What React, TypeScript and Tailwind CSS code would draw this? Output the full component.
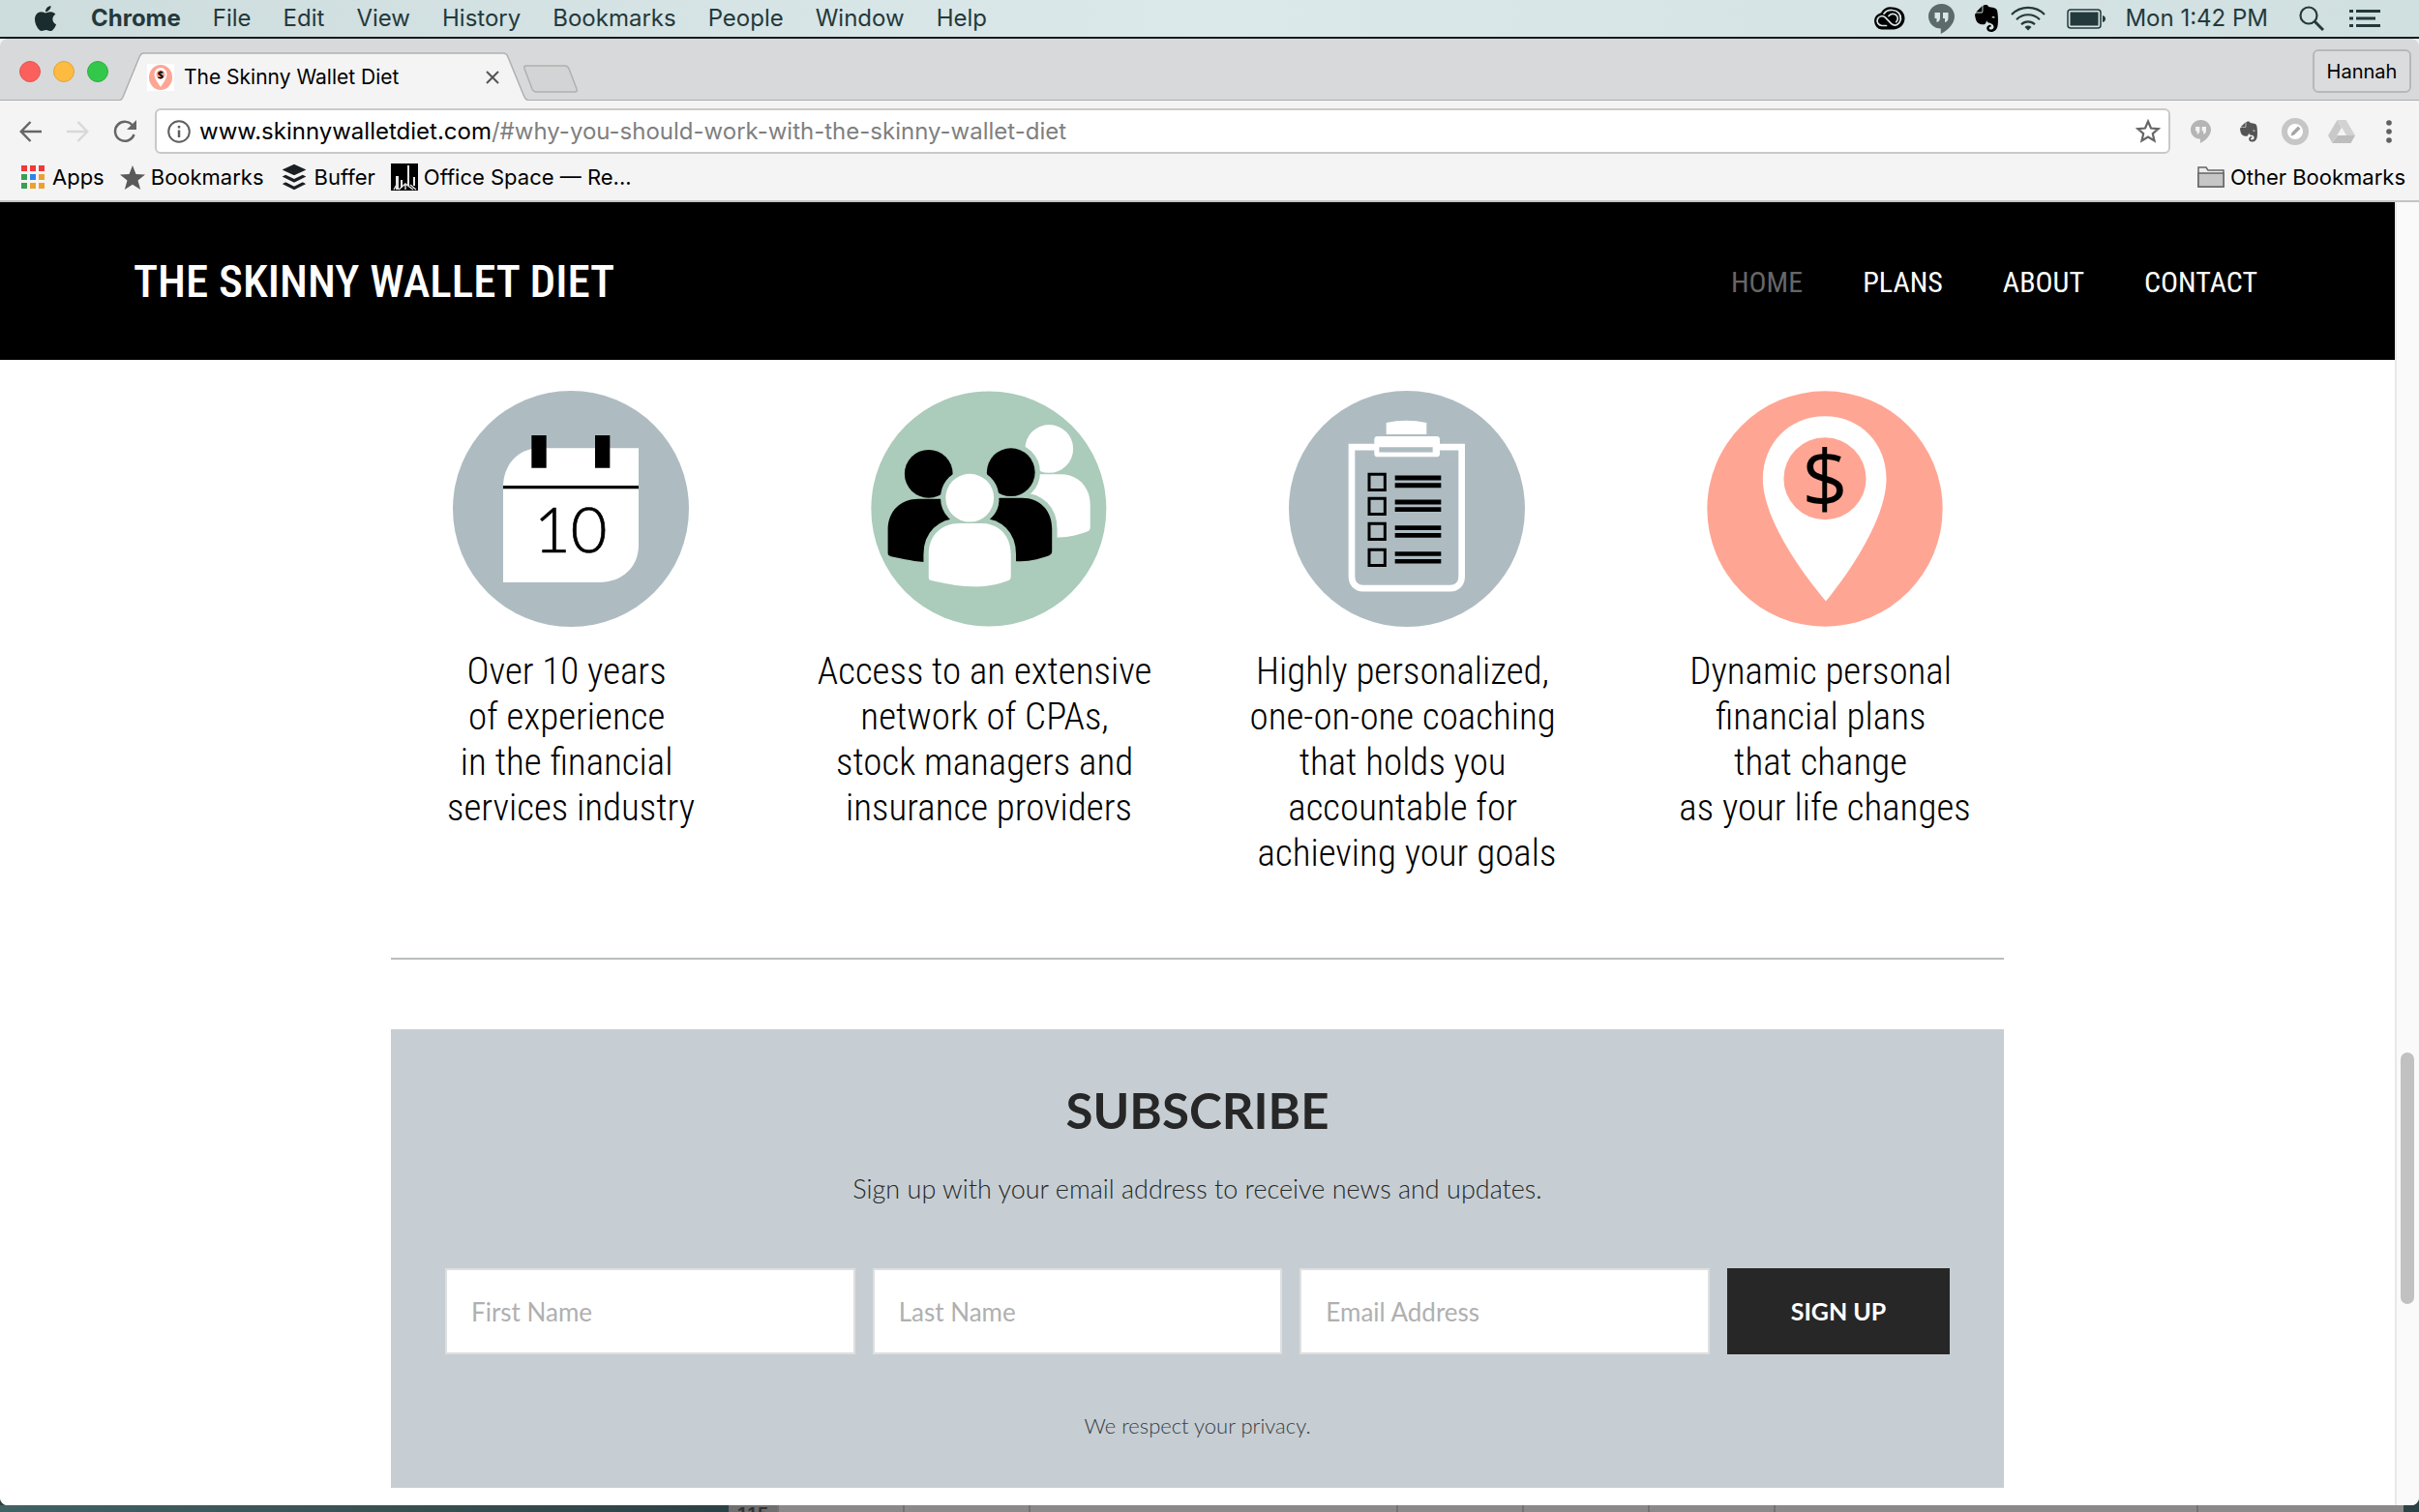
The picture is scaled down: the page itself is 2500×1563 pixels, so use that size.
import type { ReactNode } from "react";
import { FaApple, FaBuffer, FaEvernote } from "react-icons/fa";

const UI_FONT = "font-[Inter,'Liberation_Sans',sans-serif]";

function HangoutsIcon({ className, ink }: { className: string; ink: string }) {
  return (
    <svg viewBox="0 0 27 31" className={className} aria-hidden="true">
      <path d="M13.500 0C6 0 0 5.800 0 13s6 12.600 12.800 12.600V31C20 27.500 27 20.500 27 13 27 5.800 21 0 13.500 0z" fill="currentColor" />
      <path d="M6.500 9h5.500v5.500c0 2.500-1.200 4-3.500 4.500v-4h-2zM15 9h5.500v5.500c0 2.500-1.200 4-3.500 4.500v-4h-2z" fill={ink} />
    </svg>
  );
}

function CreativeCloudIcon() {
  return (
    <svg viewBox="0 0 34 24" className="h-6 w-[34px]" aria-hidden="true">
      <path d="M9.500 23.500A8.800 8.800 0 0 1 9 6.200 11.800 11.800 0 0 1 21 .5c7 0 12.500 5 12.500 11.500S28 23.500 21.500 23.500z" fill="#000" />
      <g fill="none" stroke="#d8e5e6" strokeWidth="1.700" strokeLinecap="round">
        <path d="M14.500 19.500H10a4.900 4.900 0 1 1 3.500-8.300l6 6.200c2 1.800 4.500 2 6.500.8a7 7 0 0 0 2.500-9.200" />
        <path d="M12 7.200C14 4.500 17.500 3 21 3.500c5.500.5 9 4.500 8.500 9.500" />
        <path d="M17 9.500c2-2.500 5.500-3 7.700-.8 2.200 2 2 5.300 0 7" />
      </g>
    </svg>
  );
}

function WifiIcon() {
  return (
    <svg viewBox="0 0 36 26" className="h-[26px] w-9" aria-hidden="true" fill="none" stroke="#24393b" strokeWidth="2.200">
      <path d="M1 9a24 24 0 0 1 34 0M6 14.200a17 17 0 0 1 24 0M11 19.200a10 10 0 0 1 14 0" />
      <path d="M18 25.500l-3.500-3.600a5 5 0 0 1 7 0z" fill="#24393b" stroke="none" />
    </svg>
  );
}

function BatteryIcon() {
  return (
    <svg viewBox="0 0 40 21" className="h-[21px] w-10" aria-hidden="true">
      <rect x="1" y="1" width="34" height="19" rx="3" fill="none" stroke="#24393b" strokeWidth="1.500" />
      <rect x="3.500" y="3.500" width="29" height="14" fill="#24393b" />
      <path d="M37 7c2 .5 3 1.800 3 3.500s-1 3-3 3.500z" fill="#24393b" />
    </svg>
  );
}

const menus = ["File", "Edit", "View", "History", "Bookmarks", "People", "Window", "Help"];

function MenuBar() {
  return (
    <div className="flex h-[38px] items-center bg-linear-to-r from-[#cddcdd] via-[#dce9ea] to-[#d0dfe0] text-[24px] leading-[38px] text-[#24393b]">
      <FaApple className="ml-[34px] h-[30px] w-[26px] text-[#1b2c2e]" aria-hidden="true" />
      <nav className="ml-[34px] flex gap-[33px]">
        <button className="font-bold">Chrome</button>
        {menus.map((m) => (
          <button key={m}>{m}</button>
        ))}
      </nav>
      <div className="ml-auto mr-10 flex items-center">
        <CreativeCloudIcon />
        <HangoutsIcon className="ml-6 h-[31px] w-[27px] text-[#5b6b6c]" ink="#dae7e8" />
        <FaEvernote className="ml-5 h-8 w-[26px] text-black" aria-hidden="true" />
        <span className="ml-3">
          <WifiIcon />
        </span>
        <span className="ml-[22px]">
          <BatteryIcon />
        </span>
        <time className="ml-5">Mon 1:42 PM</time>
        <svg viewBox="0 0 26 26" className="ml-8 size-[26px]" aria-hidden="true" fill="none" stroke="#24393b" strokeWidth="2.200">
          <circle cx="10" cy="10" r="8.500" />
          <path d="M16 16l9 9" strokeWidth="3" />
        </svg>
        <svg viewBox="0 0 32 20" className="ml-[26px] h-5 w-8" aria-hidden="true" fill="#24393b">
          <path d="M0 1h4v3H0zM7 1h25v3H7zM0 8.500h4v3H0zM7 8.500h20v3H7zM0 16h4v3H0zM7 16h25v3H7z" />
        </svg>
      </div>
    </div>
  );
}

function Favicon() {
  return (
    <svg viewBox="0 0 28 28" className="size-7" aria-hidden="true">
      <path d="M0 0h28v28H0z" fill="#fff" />
      <ellipse cx="14" cy="14" rx="12" ry="13" fill="#ffa594" />
      <path d="M14 24C10 18 7.500 14.500 7.500 10.500a6.500 6.500 0 0 1 13 0C20.500 14.500 18 18 14 24z" fill="#fff" />
      <circle cx="14" cy="11" r="4.500" fill="#ffa594" />
      <text x="14" y="15" textAnchor="middle" fontSize="11" fontWeight="bold" fontFamily="'Open Sans', sans-serif">$</text>
    </svg>
  );
}

function TabStrip() {
  return (
    <div className="flex h-[64px] items-stretch rounded-t-lg border-b border-[#acacac] bg-[#d8d9da]">
      <div className="ml-5 flex items-center gap-[13px] pt-1">
        <button aria-label="Close window" className="size-[22px] rounded-full border border-[#e2544f] bg-[#fc605c]" />
        <button aria-label="Minimize window" className="size-[22px] rounded-full border border-[#e0a43a] bg-[#fdbc40]" />
        <button aria-label="Zoom window" className="size-[22px] rounded-full border border-[#2daf3f] bg-[#34c84a]" />
      </div>
      <div className="relative mt-[14px] -mb-px ml-3 flex w-[422px] items-center">
        <svg viewBox="0 0 422 50" preserveAspectRatio="none" className="absolute inset-0 h-full w-full" aria-hidden="true">
          <path d="M0 50C2 49 3 47 4 44L20 5C21.500 2 22 1 25 1H396C399 1 400 2 401 5L417 44C418 47 419 49 422 50z" fill="#f4f4f4" />
          <path d="M0 49.500C2 49 3 47 4 44L20 5C21.500 2 22 1 25 1H396C399 1 400 2 401 5L417 44C418 47 419 49 422 49.500" fill="none" stroke="#b0b0b0" strokeWidth="1.500" />
        </svg>
        <div className="relative flex w-full items-center pl-7 pr-[30px] pt-[2px] text-[21px] text-black">
          <Favicon />
          <span className="ml-[10px]">The Skinny Wallet Diet</span>
          <button aria-label="Close tab" className="ml-auto">
            <svg viewBox="0 0 14 14" className="size-[14px]" aria-hidden="true" stroke="#555" strokeWidth="2">
              <path d="M1 1l12 12M13 1L1 13" />
            </svg>
          </button>
        </div>
      </div>
      <button aria-label="New tab" className="-ml-[6px] mt-[19px] self-center">
        <svg viewBox="0 0 58 29" className="h-[29px] w-[58px]" aria-hidden="true">
          <path d="M4 1h40c2 0 3 1 4 3l8 21c1 2 0 3-2 3H14c-2 0-3-1-4-3L2 4C1 2 2 1 4 1z" fill="#d3d4d5" stroke="#b0b0b0" strokeWidth="1.500" />
        </svg>
      </button>
      <button className="mt-[11px] mb-[7px] ml-auto mr-2 w-[102px] rounded-md border-2 border-[#b7b8b9] bg-[#dbdcdd] text-[20px] leading-none text-black">Hannah</button>
    </div>
  );
}

function Toolbar() {
  return (
    <div className="flex items-center pt-2 pr-7 text-[#5f5f5f]">
      <button aria-label="Back" className="ml-5">
        <svg viewBox="0 0 23 22" className="h-[22px] w-[23px]" aria-hidden="true" fill="none" stroke="#666" strokeWidth="2.500">
          <path d="M23 11H2M11.500 1L1.800 11l9.700 10" />
        </svg>
      </button>
      <button aria-label="Forward" className="ml-[26px]">
        <svg viewBox="0 0 23 22" className="h-[22px] w-[23px]" aria-hidden="true" fill="none" stroke="#d8d8d8" strokeWidth="2.500">
          <path d="M0 11h21M11.500 1l9.700 10-9.700 10" />
        </svg>
      </button>
      <button aria-label="Reload" className="ml-[25px]">
        <svg viewBox="0 0 24 24" className="size-6" aria-hidden="true" fill="none" stroke="#666" strokeWidth="2.500">
          <path d="M20.500 6.500A10 10 0 1 0 21.500 15" />
          <path d="M24 0v10H14z" fill="#666" stroke="none" />
        </svg>
      </button>
      <div className="ml-[19px] flex h-[47px] flex-1 items-center rounded-md border-2 border-[#c9c9c9] bg-white pl-[11px] pr-2">
        <svg viewBox="0 0 24 24" className="size-6" aria-hidden="true" fill="none" stroke="#5f5f5f" strokeWidth="2">
          <circle cx="12" cy="12" r="10.800" />
          <path d="M12 10.500V18M12 6v2.500" strokeWidth="2.500" />
        </svg>
        <a href="#why-you-should-work-with-the-skinny-wallet-diet" className="ml-[9px] text-[24px] leading-[42px] text-[#7f7f7f]">
          <span className="text-black">www.skinnywalletdiet.com</span>/#why-you-should-work-with-the-skinny-wallet-diet
        </a>
        <button aria-label="Bookmark this page" className="ml-auto">
          <svg viewBox="0 0 26 25" className="h-[25px] w-[26px]" aria-hidden="true" fill="none" stroke="#666" strokeWidth="2.200">
            <path d="M13 2.500l3 7 7.500.7-5.700 5 1.700 7.300-6.500-3.900-6.500 3.900 1.700-7.300-5.700-5 7.500-.7z" />
          </svg>
        </button>
      </div>
      <HangoutsIcon className="ml-[21px] h-[26px] w-[21px] text-[#b5b5b5]" ink="#f4f4f4" />
      <FaEvernote className="ml-[29px] h-[24px] w-5 text-[#555]" aria-hidden="true" />
      <svg viewBox="0 0 28 28" className="ml-6 size-7" aria-hidden="true">
        <circle cx="14" cy="14" r="11" fill="#fff" stroke="#c6c6c6" strokeWidth="6" />
        <path d="M9.500 18.500l1-3.500 6.500-6.500 2.500 2.500-6.500 6.500z" fill="#a5a5a5" />
      </svg>
      <svg viewBox="0 0 28 24" className="ml-5 h-6 w-7" aria-hidden="true">
        <path d="M9.500 0L0 16l4.500 8 9.500-16z" fill="#c9c9c9" />
        <path d="M9.500 0h9L28 16h-9z" fill="#d2d2d2" />
        <path d="M9.500 16H28l-4.500 8h-19z" fill="#bdbdbd" />
      </svg>
      <button aria-label="Chrome menu" className="ml-8">
        <svg viewBox="0 0 6 24" className="h-6 w-[6px]" aria-hidden="true" fill="#606060">
          <circle cx="3" cy="3" r="2.800" />
          <circle cx="3" cy="12" r="2.800" />
          <circle cx="3" cy="21" r="2.800" />
        </svg>
      </button>
    </div>
  );
}

const dots = ["#ee3a39", "#ee3a39", "#ee3a39", "#3a9f55", "#2f83e8", "#eba12f", "#3a9f55", "#eba12f", "#eba12f"];

function Bookmark({ icon, children }: { icon: ReactNode; children: ReactNode }) {
  return (
    <a href="#bookmark" className="flex items-center gap-[6px]">
      {icon}
      {children}
    </a>
  );
}

function BookmarksBar() {
  return (
    <div className="flex h-[50px] items-center gap-4 border-b-2 border-[#c4c4c4] pl-[22px] pr-[14px] text-[22px] text-black">
      <Bookmark
        icon={
          <span className="mr-[2px] grid grid-cols-3 gap-[3px]">
            {dots.map((c, i) => (
              <span key={i} className="size-[6px]" style={{ backgroundColor: c }} />
            ))}
          </span>
        }
      >
        Apps
      </Bookmark>
      <Bookmark
        icon={
          <svg viewBox="0 0 26 25" className="h-[25px] w-[26px]" aria-hidden="true" fill="#5a5a5a">
            <path d="M13 0l3.500 9 9.500.5-7.500 6 2.700 9.500L13 19.700 4.800 25l2.700-9.500L0 9.500 9.500 9z" />
          </svg>
        }
      >
        Bookmarks
      </Bookmark>
      <Bookmark icon={<FaBuffer className="size-[30px] text-[#1c1f21]" aria-hidden="true" />}>Buffer</Bookmark>
      <Bookmark
        icon={
          <svg viewBox="0 0 28 28" className="size-7" aria-hidden="true">
            <path d="M0 0h28v28H0z" />
            <path d="M17 2h2v21h-2zM5 13h3v14H5zM10 17h2v8h-2zM23 14h2v9h-2z" fill="#e8e8e8" />
            <path d="M8 27l7-6 8 6M15 21v6M3 27l4-7M20 22l6 5" stroke="#ddd" strokeWidth="1.500" fill="none" />
          </svg>
        }
      >
        Office Space — Re...
      </Bookmark>
      <div className="ml-auto">
        <Bookmark
          icon={
            <svg viewBox="0 0 28 22" className="h-[22px] w-7" aria-hidden="true" fill="#c6c6c6" stroke="#666" strokeWidth="1.500">
              <path d="M1 21V1h8l2 3h16v17z" fill="#ececec" />
              <path d="M1 7h26v14H1z" />
            </svg>
          }
        >
          Other Bookmarks
        </Bookmark>
      </div>
    </div>
  );
}

function CalendarArt() {
  return (
    <svg viewBox="81 42 732 732" className="size-[244px]" role="img" aria-label="Calendar">
      <circle cx="447" cy="408" r="366" fill="#aebcc2" />
      <path d="M237 636V340C237 270 285 220 350 220H657V520C657 590 605 636 535 636z" fill="#fff" />
      <path d="M325 180h46v101h-46zM522 180h46v101h-46zM237 336h420v10H237z" />
      <text x="446" y="542" textAnchor="middle" fontSize="195" fontWeight="300" fontFamily="Lato, sans-serif" stroke="#000" strokeWidth="2">10</text>
    </svg>
  );
}

function PeopleArt() {
  const body = "M415 622V550C415 490 455 453 510 453H578C632 453 671 490 671 550V618C671 626 668 629 662 632C620 648 580 652 545 650C500 649 465 640 425 632C418 630 415 628 415 622z";
  return (
    <svg viewBox="235 42 735 732" className="size-[244px]" role="img" aria-label="People">
      <circle cx="602" cy="408" r="366" fill="#abcbbb" />
      <g fill="#fff">
        <circle cx="790" cy="221" r="75" />
        <path d={body} transform="translate(247 -153)" />
      </g>
      <g stroke="#abcbbb" strokeWidth="32">
        <circle cx="671" cy="294" r="75" />
        <path d={body} transform="translate(128 -79)" />
      </g>
      <circle cx="671" cy="294" r="75" />
      <path d={body} transform="translate(128 -79)" />
      <path d="M440 380h200v70H440z" fill="#abcbbb" />
      <circle cx="415" cy="299" r="75" />
      <path d={body} transform="translate(-127 -76)" />
      <path d="M605 440C628 420 634 400 634 376H720V480H640z" />
      <g fill="#fff" stroke="#abcbbb" strokeWidth="32">
        <circle cx="543" cy="374" r="75" />
        <path d={body} />
      </g>
      <g fill="#fff">
        <circle cx="543" cy="374" r="75" />
        <path d={body} />
      </g>
    </svg>
  );
}

function ClipboardArt() {
  return (
    <svg viewBox="179 40 732 722" preserveAspectRatio="none" className="size-[244px]" role="img" aria-label="Clipboard">
      <ellipse cx="545" cy="401" rx="366" ry="361" fill="#aebcc2" />
      <path d="M374 212H715V608C715 630 700 644 680 644H409C389 644 374 630 374 608z" fill="none" stroke="#fff" strokeWidth="20" />
      <rect x="444" y="179" width="203" height="63" rx="10" fill="#fff" />
      <path d="M459 212h166v16H459z" fill="#aebcc2" />
      <path d="M481 138q62-14 125 0v35H481z" fill="#fff" />
      <g fill="none" stroke="#000" strokeWidth="9">
        <path d="M428 295h49v48h-49zM428 369h49v48h-49zM428 446h49v48h-49zM428 526h49v48h-49z" />
      </g>
      <path d="M508 299h143v15H508zM508 322h143v15H508zM508 373h143v15H508zM508 396h143v14H508zM508 452h143v14H508zM508 475h143v14H508zM508 532h143v13H508zM508 555h143v13H508z" />
    </svg>
  );
}

function PinArt() {
  return (
    <svg viewBox="159 42 734 732" className="size-[244px]" role="img" aria-label="Map pin with dollar sign">
      <circle cx="526" cy="408" r="366" fill="#ffa594" />
      <path d="M529 695C440 590 333 430 333 315C333 205 415 120 526 120S717 205 717 315C717 430 615 590 529 695z" fill="#fff" />
      <circle cx="526" cy="314" r="128" fill="#ffa594" />
      <text x="526" y="404" textAnchor="middle" fontSize="250" fontFamily="'Open Sans', sans-serif">$</text>
    </svg>
  );
}

const features = [
  { art: <CalendarArt />, text: "Over 10 years \nof experience \nin the financial \nservices industry" },
  { art: <PeopleArt />, text: "Access to an extensive \nnetwork of CPAs, \nstock managers and \ninsurance providers" },
  { art: <ClipboardArt />, text: "Highly personalized, \none-on-one coaching \nthat holds you \naccountable for \nachieving your goals" },
  { art: <PinArt />, text: "Dynamic personal \nfinancial plans \nthat change \nas your life changes" },
];

const fields = [
  { id: "first-name", label: "First Name", type: "text" },
  { id: "last-name", label: "Last Name", type: "text" },
  { id: "email", label: "Email Address", type: "email" },
];

function SitePage() {
  return (
    <div className="flex-1 bg-white">
      <header className="flex h-[163px] items-center justify-between bg-black pt-[2px] pl-[138px] pr-[142px] font-['Roboto_Condensed','Liberation_Sans_Narrow',Roboto,sans-serif] text-white">
        <a href="#home" className="text-[47px] font-medium">THE SKINNY WALLET DIET</a>
        <nav className="flex gap-[62px] text-[30px]">
          <a href="#home" className="text-[#666]">HOME</a>
          <a href="#plans">PLANS</a>
          <a href="#about">ABOUT</a>
          <a href="#contact">CONTACT</a>
        </nav>
      </header>
      <main className="mx-auto max-w-[1667px] pt-8">
        <ul className="-ml-[30px] -mr-[31px] grid grid-cols-4">
          {features.map((f) => (
            <li key={f.text} className="flex flex-col items-center">
              {f.art}
              <p className="mt-[23px] whitespace-pre text-center font-['Roboto_Condensed','Liberation_Sans_Narrow',Roboto,sans-serif] text-[39px] font-light leading-[47px] text-black">{f.text}</p>
            </li>
          ))}
        </ul>
        <hr className="mt-[84px] border-t-2 border-[#b9bdbd]" />
        <section className="mt-[72px] flex h-[474px] flex-col items-center bg-[#c6ced3] px-14 font-[Lato,sans-serif] text-[#272727]">
          <h2 className="mt-[52px] text-[51px] font-bold leading-[64px]">SUBSCRIBE</h2>
          <p className="mt-[31px] text-[27px] font-light leading-9">Sign up with your email address to receive news and updates.</p>
          <form className="mt-16 flex w-full gap-[18px]" onSubmit={(e) => e.preventDefault()}>
            {fields.map((f) => (
              <input
                key={f.id}
                id={f.id}
                type={f.type}
                aria-label={f.label}
                placeholder={f.label}
                className="h-[89px] min-w-0 flex-1 border-2 border-[#dedfdf] bg-white px-[25px] text-[26px] placeholder:text-[#b0b0b0]"
              />
            ))}
            <button type="submit" className="h-[89px] w-[230px] bg-[#272727] text-[25px] font-bold text-white">SIGN UP</button>
          </form>
          <p className="mt-[60px] text-[22px] font-light leading-7 text-[#3a3d3f]">We respect your privacy.</p>
        </section>
      </main>
    </div>
  );
}

const cells = ["w-[130px]", "w-[130px]", "w-[380px]", "w-[130px]", "w-[130px]", "w-[130px]", "w-[437px]", "flex-1"];

function DesktopEdge() {
  return (
    <div className="flex h-[7px] overflow-hidden bg-[#2c4145]">
      <div className="w-[753px] bg-linear-to-r from-[#3f6265] via-[#3a5154] to-[#2b4145]" />
      <div className="w-[50px] bg-[#6f6f6f] text-center font-['Liberation_Sans',Arial,sans-serif] text-[20px] font-bold leading-[18px] text-[#333]">115</div>
      <div className="flex flex-1 bg-[#8b8989]">
        {cells.map((c, i) => (
          <div key={i} className={`${c} border-l-2 border-[#747272]`} />
        ))}
      </div>
      <div className="w-4" />
    </div>
  );
}

export default function App() {
  return (
    <div className={`flex min-h-screen flex-col bg-[#2c4145] ${UI_FONT}`}>
      <MenuBar />
      <div className="h-[2px] bg-[#121c1d]" />
      <div className="flex flex-1 flex-col overflow-hidden rounded-b-lg bg-[#f4f4f4]">
        <TabStrip />
        <Toolbar />
        <BookmarksBar />
        <div className="flex flex-1">
          <SitePage />
          <div className="flex w-[25px] flex-col border-l-2 border-[#e8e8e8] bg-[#fafafa] pl-1">
            <div className="mt-[879px] h-[260px] w-[14px] rounded-full bg-[#c1c1c1]" />
          </div>
        </div>
      </div>
      <DesktopEdge />
    </div>
  );
}
